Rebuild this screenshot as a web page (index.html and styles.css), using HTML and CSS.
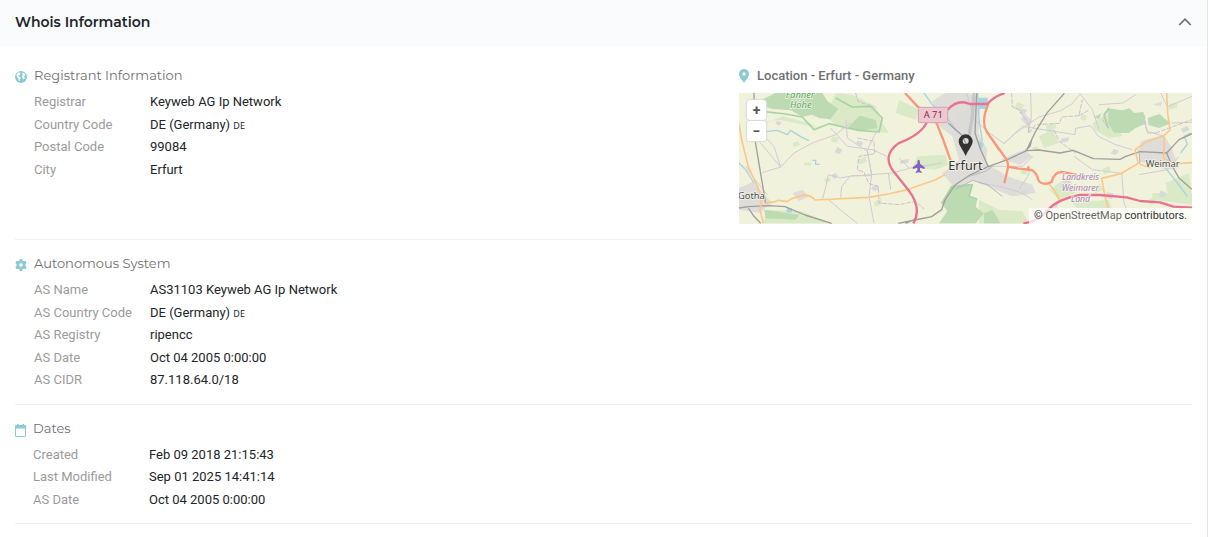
FILE: index.html
```
<!DOCTYPE html>
<html lang="en">
<head>
<meta charset="utf-8">
<meta name="viewport" content="width=device-width, initial-scale=1">
<title>Whois Information</title>
<link rel="stylesheet" href="styles.css">
</head>
<body>
<main class="card">
  <header class="card-header">
    <h1 class="card-title">Whois Information</h1>
    <button class="collapse" type="button" aria-label="Collapse" aria-expanded="true">
      <svg width="14" height="10" viewBox="0 0 14 10"><path d="M1.2 8 7 2.2 12.8 8" fill="none" stroke="#6b6d70" stroke-width="1.7"/></svg>
    </button>
  </header>

  <div class="card-body">
    <section class="section with-map">
      <div class="block">
        <svg class="icon" width="12" height="12" viewBox="0 0 12 12"><circle cx="6" cy="6" r="6" fill="#8acbd2"/><path d="M1.800 2.800 3.600 1.500 5.300 1.400 5.600 2.300 4.600 2.900 5 3.700 3.800 4.400 3.500 5.300 5 5.900 5.700 7 4.900 8.300 4.500 9.900 3.800 9.700 3.400 7.800 2.200 6.500 1.500 4.800ZM7.500 1.500 9.100 2.200 10.300 4 9.400 4.700 9 5.600 9.800 6.400 9.200 8 8.500 8.600 7.900 7.200 7.100 6.300 7.200 4.800 8 4 7.300 3.200Z" fill="#fff"/></svg>
        <div class="info">
          <h2 class="title">Registrant Information</h2>
          <dl class="fields">
            <dt>Registrar</dt><dd>Keyweb AG Ip Network</dd>
            <dt>Country Code</dt><dd>DE (Germany) <span class="flag">DE</span></dd>
            <dt>Postal Code</dt><dd>99084</dd>
            <dt>City</dt><dd>Erfurt</dd>
          </dl>
        </div>
      </div>
      <div class="location">
        <h2 class="location-title">
          <svg width="10" height="14" viewBox="0 0 10 14"><path fill-rule="evenodd" d="M5 0a5 5 0 0 1 5 5c0 3-2.600 5-5 9C2.600 10 0 8 0 5a5 5 0 0 1 5-5Zm0 3.300a1.700 1.700 0 1 0 0 3.400 1.700 1.700 0 0 0 0-3.400Z" fill="#8acbd2"/></svg>
          Location - Erfurt - Germany
        </h2>
        <div class="map">
          <svg class="map-canvas" viewBox="0 0 1359 393" preserveAspectRatio="xMidYMid slice" role="img" aria-label="Map of Erfurt">
            <rect width="1359" height="393" fill="#f1f2dc"/>
            <g fill="#dae9c6">
              <path d="M70 95 130 70 210 90 240 105 215 100 120 80 90 85ZM290 0 340 5 410 40 430 90 450 120 400 115 290 95 260 70ZM535 190 620 185 628 215 590 230 520 225ZM80 350 190 355 270 391 75 391ZM930 290 990 250 1010 300 960 320ZM1060 90 1110 60 1150 130 1110 135 1065 110ZM1280 270 1350 240 1359 320 1290 320ZM720 320 780 350 850 355 870 391 720 391ZM900 130 940 110 960 150 915 165ZM650 60 690 45 700 120 655 110ZM480 20 540 50 530 80 470 60ZM1000 330 1110 320 1120 350 1020 350ZM1240 300 1359 300 1359 335 1240 320Z"/>
              <path d="m160 150 18-5 6 12-20 5Zm120-20 20 5-7 14-18-4Zm75 70 25-9 3 16-22 7Zm-160 8 22 1-3 10-20-2Zm60 50 17-4 4 10-17 5Zm150 70 20-12 5 17-22 8Zm-220 30 17 3-3 12-16-4Zm650-330 22 8-14 18-20-7Zm85 70 26-8 6 14-26 13Zm-70 130 20 4-9 14-18-6Zm240 0 21-9 5 17-21 8Zm-210-65 16-3 4 14-18 1Zm410-130 26-5-3 17-23 5Zm-260 30 13 5-3 16-17-5Zm-180 225 18 9-8 12-18-7Zm210-5 24-10 8 18-24 10Zm170 35 22-8 3 19-22 8Z"/>
            </g>
            <g fill="#dad9d9">
              <path d="M620 0 690 0 725 20 718 120 745 170 740 210 805 250 880 275 890 300 820 310 745 280 700 260 650 290 610 240 660 200 640 130 600 100 580 25ZM0 285 45 265 75 305 100 330 60 360 0 350ZM1205 145 1275 125 1300 170 1320 225 1285 230 1200 205ZM785 200 855 170 880 190 845 215ZM160 300 190 291 210 311 180 324ZM1240 35 1270 25 1265 40ZM855 60 882 85 862 96 845 80Z" opacity=".85"/>
              <path d="m95 22 18 5-5 15-16-3Zm20 60 14 8-10 8-10-7Zm180 80 16 8-9 13-15-5Zm190 40 25-4-3 12-24 2Zm-130-60 18 7-7 12-16-7Zm-80 105 15-8 8 10-13 9Zm130 30 17 6-12 12-15-8Zm440-230 20 3-9 14-16-4Zm120 90 25-4-2 12-22 5Zm160 30 15 7-10 13-15-6Zm-20 130 18 4-3 18-20-4Zm-130-40 24 4-10 14-19-4Zm350-150 19-8 8 10-19 12Zm-60 185 16 7-4 16-17-5Z"/>
            </g>
            <g fill="#bcdbb2">
              <path d="M68 20 110 0 250 0 266 25 298 48 274 79 240 75 220 65 190 71 155 52 100 48 72 39Z"/>
              <path d="M1108 46 1150 52 1172 46 1185 60 1213 57 1220 92 1190 105 1170 120 1125 119 1108 91ZM1227 74 1262 63 1278 78 1295 91 1260 105 1228 96Z"/>
              <path d="M608 331 638 281 700 275 690 310 715 318 710 342 735 361 710 391 600 391 625 355ZM75 350 180 365 170 380 80 376ZM325 105 362 68 410 80 415 105 360 115ZM1065 72 1088 61 1080 79Z"/>
              <path d="M735 361 760 350 785 391 735 391Z"/>
            </g>
            <g fill="none" stroke="#a8d4a4" stroke-width="5" stroke-linejoin="round">
              <path d="M62 20 70 55 140 63 190 72 225 110 270 92 325 105 360 112 420 117 430 75 395 40 340 42 290 15"/>
              <path d="M608 331 638 281 700 275 690 310 715 318M1108 106 1095 65 1110 45"/>
            </g>
            <g fill="none" stroke="#a9d3df" stroke-width="4" stroke-linejoin="round">
              <path d="M80 116 115 112 145 125 155 112 185 131 210 143M555 0 580 35 625 75 650 110M0 210 20 230 45 270M716 0 720 80 730 145M1355 120 1335 130 1345 153 1325 180M1280 225 1315 270 1345 310M220 202h10v12h12"/>
              <path d="M718 16h26v30h-22ZM145 348h12v8h-12ZM720 145l12 8-5 14Z" fill="#a9d3df"/>
            </g>
            <g fill="none" stroke="#d0ccd5" stroke-width="3" stroke-linejoin="round">
              <path d="M60 145 125 222 165 180 220 150 290 125 335 90M125 222 70 239M55 110 105 160 125 222M320 80 325 135 385 175 398 245 390 310 405 391M250 320 262 275 268 245 305 255 330 250 460 240 515 225 610 210M305 315 308 280 335 248 398 248M275 105 325 160 400 170 445 190M448 240 455 290M510 225 480 195M398 245 385 170 415 110M270 321 310 355 355 391M85 305 45 256 20 220"/>
              <path d="M683 0 705 80 752 120 795 152 830 120 900 72 965 53 1000 32 1022 5M875 0 877 70 868 120M1022 0 1060 50 1080 110M795 152 850 100 1008 125 1010 106 1055 98 1078 130 1130 155 1180 170M1265 0 1285 42 1359 10M1080 35 1152 30 1190 5M1210 70 1225 115 1275 130M1298 90 1359 88M740 220 850 220 882 190M720 270 790 282 850 300 880 320M960 320 935 380M1148 241 1155 330 1180 391M1200 245 1285 230 1320 190M1005 190 1060 230 1148 241M840 290 866 250 875 230"/>
            </g>
            <path d="M350 0 357 25 405 42M355 135 405 145 407 182 360 190 355 230 375 238 390 272 418 280 420 330 480 335 530 325 555 348M818 0 820 42 838 48 867 90 870 120M870 120 890 95 962 91 968 72 1020 68 1030 20M1020 68 1050 51M945 110 960 145 1010 180M1108 106 1090 80 1110 50M1215 65 1225 120 1250 120M1250 120 1359 80" fill="none" stroke="#cfbfd2" stroke-width="3" stroke-dasharray="14 4"/>
            <path d="M705 0 700 70 690 130" fill="none" stroke="#c6c5c8" stroke-width="10"/>
            <g fill="none" stroke="#9e9e9c" stroke-width="4" stroke-linejoin="round">
              <path d="M45 0 48 141 80 331M0 345 28 341 90 338 138 341 198 366 278 391M28 345 45 370 65 391M478 391 528 381 578 371 608 350 618 321 648 276 693 246 748 221 805 200 863 173 900 171 963 180 1003 172 1063 197 1143 199 1160 190 1203 176 1283 180 1300 220 1320 255 1359 289M976 1 923 61 890 115 863 171M878 141 873 160 858 175M713 1 708 121 725 170 748 221M628 91 668 126 690 170M1283 180 1320 140 1359 122M500 391 525 380"/>
              <path d="M650 290 700 262 745 275 790 310M690 250 740 235 760 220M1200 170 1203 214" stroke="#b8b8bb" stroke-width="3"/>
            </g>
            <g fill="none" stroke="#fbc888" stroke-width="5" stroke-linejoin="round">
              <path d="M0 91 8 141 28 221 58 286 66 321 63 351 73 391M76 331 108 326 118 322 145 326 155 318 188 308 Q210 302 228 321L388 313 448 303 508 289 588 261 618 245M1283 0 1286 61 1293 111 1273 129 1223 146 1188 171 1198 211 1148 241 1088 256 1098 311 1108 345M1276 131 1274 195 1303 213 1359 209M928 271 945 290 961 321M1203 214 1235 225"/>
            </g>
            <g fill="none" stroke="#fa967c" stroke-width="7" stroke-linejoin="round">
              <path d="M498 0 536 41 570 60 593 91 613 141 636 206M748 33Q725 86 743 116L781 171M743 116 793 186 Q812 210 806 228L796 271M806 221 840 227 878 231 Q894 240 898 261 Q910 280 938 267 Q946 232 976 238L1013 246M868 220v14"/>
            </g>
            <g fill="none" stroke="#e8728f" stroke-width="7" stroke-linejoin="round">
              <path d="M798 0 Q765 10 745 33L693 33Q655 17 626 51M563 89Q545 125 478 151Q425 190 468 241L508 291 Q550 345 523 391M853 391Q895 386 925 353 Q955 318 1023 306L1083 306 1163 313 1203 324 1263 328 1303 341 1359 344"/>
            </g>
            <path d="M539 200q4 0 4 12l14 11v5l-14-4v8l5 5v3l-9-2-9 2v-3l5-5v-8l-14 4v-5l14-11q0-12 4-12Z" fill="#8461c4"/>
            <rect x="538" y="43" width="88" height="46" rx="4" fill="#edc8d1" stroke="#d8a0af" stroke-width="3"/>
            <g class="road-label"><text x="554" y="75">A 71</text></g>
            <g class="forest-label"><text x="140" y="15">Fahner</text><text x="153" y="46">Höhe</text></g>
            <g class="place-label"><text x="-3" y="317">Gotha</text><text x="1220" y="223">Weimar</text></g>
            <g class="city-label"><text x="628" y="231">Erfurt</text></g>
            <g class="county-label"><text x="969" y="262">Landkreis</text><text x="968" y="294">Weimarer</text><text x="996" y="326">Land</text></g>
            <path fill-rule="evenodd" d="M680 124a21 21 0 0 1 21 21c0 13-13 25-21 44-8-19-21-31-21-44a21 21 0 0 1 21-21Zm0 11a9 9 0 1 0 0 18 9 9 0 0 0 0-18Z" fill="#333"/>
          </svg>
          <div class="zoom">
            <button type="button" aria-label="Zoom in">+</button>
            <button type="button" aria-label="Zoom out">−</button>
          </div>
          <div class="credit">© <a href="#osm">OpenStreetMap</a> contributors.</div>
        </div>
      </div>
    </section>

    <section class="section">
      <div class="block">
        <svg class="icon" width="12" height="12" viewBox="0 0 12 12"><path fill-rule="evenodd" d="M4.800 0h2.400l.4 1.700 1.100.6 1.700-.5 1.200 2.100L10.400 5.200v1.600l1.200 1.300-1.200 2.100-1.700-.5-1.100.6-.4 1.700H4.800l-.4-1.700-1.100-.6-1.700.5L.4 8.100l1.200-1.300V5.200L.4 3.900l1.200-2.100 1.700.5 1.100-.6ZM6 4.200a1.800 1.800 0 1 0 0 3.600 1.800 1.800 0 0 0 0-3.600Z" fill="#8acbd2"/></svg>
        <div class="info">
          <h2 class="title">Autonomous System</h2>
          <dl class="fields">
            <dt>AS Name</dt><dd>AS31103 Keyweb AG Ip Network</dd>
            <dt>AS Country Code</dt><dd>DE (Germany) <span class="flag">DE</span></dd>
            <dt>AS Registry</dt><dd>ripencc</dd>
            <dt>AS Date</dt><dd>Oct 04 2005 0:00:00</dd>
            <dt>AS CIDR</dt><dd>87.118.64.0/18</dd>
          </dl>
        </div>
      </div>
    </section>

    <section class="section">
      <div class="block">
        <svg class="icon" width="11" height="13" viewBox="0 0 11 13"><path fill-rule="evenodd" d="M2 0h1.500v1h4V0H9v1h.7A1.300 1.300 0 0 1 11 2.300v9.400A1.300 1.300 0 0 1 9.700 13H1.300A1.300 1.300 0 0 1 0 11.700V2.300A1.300 1.300 0 0 1 1.300 1H2ZM1 4.500v7.100q0 .4.400.4h8.200q.4 0 .4-.4V4.500Z" fill="#8acbd2"/></svg>
        <div class="info">
          <h2 class="title">Dates</h2>
          <dl class="fields">
            <dt>Created</dt><dd>Feb 09 2018 21:15:43</dd>
            <dt>Last Modified</dt><dd>Sep 01 2025 14:41:14</dd>
            <dt>AS Date</dt><dd>Oct 04 2005 0:00:00</dd>
          </dl>
        </div>
      </div>
    </section>
  </div>
</main>
</body>
</html>
```
FILE: styles.css
```
* { box-sizing: border-box; }

body {
  margin: 0;
  background: #fff;
  color: #212529;
  font: 13px/20px Roboto, sans-serif;
}

h1, h2, dl, dd { margin: 0; }

.card {
  min-height: 100vh;
  margin-right: 2px;
  border-right: 1px solid #e4e5e7;
}

.card-header {
  display: flex;
  align-items: center;
  justify-content: space-between;
  padding: 11px 15px 13px;
  background: #fafbfd;
}

.card-title {
  font: 600 14px/22px Montserrat, Inter, sans-serif;
}

.collapse {
  display: flex;
  padding: 0;
  border: 0;
  background: none;
  cursor: pointer;
}

.card-body { padding: 0 15px; }

.section {
  padding: 13px 0 12px;
  border-bottom: 1px solid #f1f1f2;
}

.with-map {
  display: grid;
  grid-template-columns: 724fr 453fr;
  padding: 19px 0 15px;
}

.block {
  display: flex;
  align-items: flex-start;
  gap: 7px;
}

.icon {
  flex: none;
  margin-top: 6px;
}

.title {
  color: #6f7073;
  font: 400 13px/20px Montserrat, Inter, sans-serif;
}

.fields {
  display: grid;
  grid-template-columns: 116px auto;
  margin-top: 6px;
  font-size: 15px;
  line-height: 150%;
}

.fields dt, .fields dd { font-size: 13px; }
.fields dt { color: #9b9b9b; }

.flag {
  font: 9px/9px "Noto Sans", sans-serif;
}

.location-title {
  display: flex;
  align-items: center;
  gap: 8px;
  color: #6f7073;
  font-size: 13px;
  font-weight: 500;
  line-height: 22px;
}

.map {
  position: relative;
  margin-top: 6px;
  overflow: hidden;
}

.map-canvas {
  display: block;
  width: 100%;
}

.map-canvas text { font-family: "Noto Sans", sans-serif; }
.road-label { fill: #8b2947; font-size: 28px; }
.forest-label { fill: #57a45b; font-size: 28px; font-style: italic; }
.place-label { fill: #4c4c4c; font-size: 28px; }
.city-label { fill: #333; font-size: 38px; }
.county-label { fill: #aa82b3; font-size: 26px; font-style: italic; }
.city-label, .place-label, .forest-label, .county-label {
  paint-order: stroke;
  stroke: #f5f5ea;
  stroke-width: 4px;
}

.zoom {
  position: absolute;
  top: 7px;
  left: 8px;
  display: grid;
  gap: 1px;
}

.zoom button {
  width: 19px;
  height: 20px;
  padding: 0;
  border: 0;
  border-radius: 3px;
  background: #fff;
  box-shadow: 0 0 1px 1px #dcdcd5;
  color: #555;
  font: 700 14px/20px Roboto, sans-serif;
}

.credit {
  position: absolute;
  right: 0;
  bottom: 0;
  padding: 0 5px;
  background: rgba(255, 255, 255, .75);
  color: #333;
  font-size: 11px;
  line-height: 16px;
}

.credit a {
  color: #666;
  text-decoration: none;
}
```
